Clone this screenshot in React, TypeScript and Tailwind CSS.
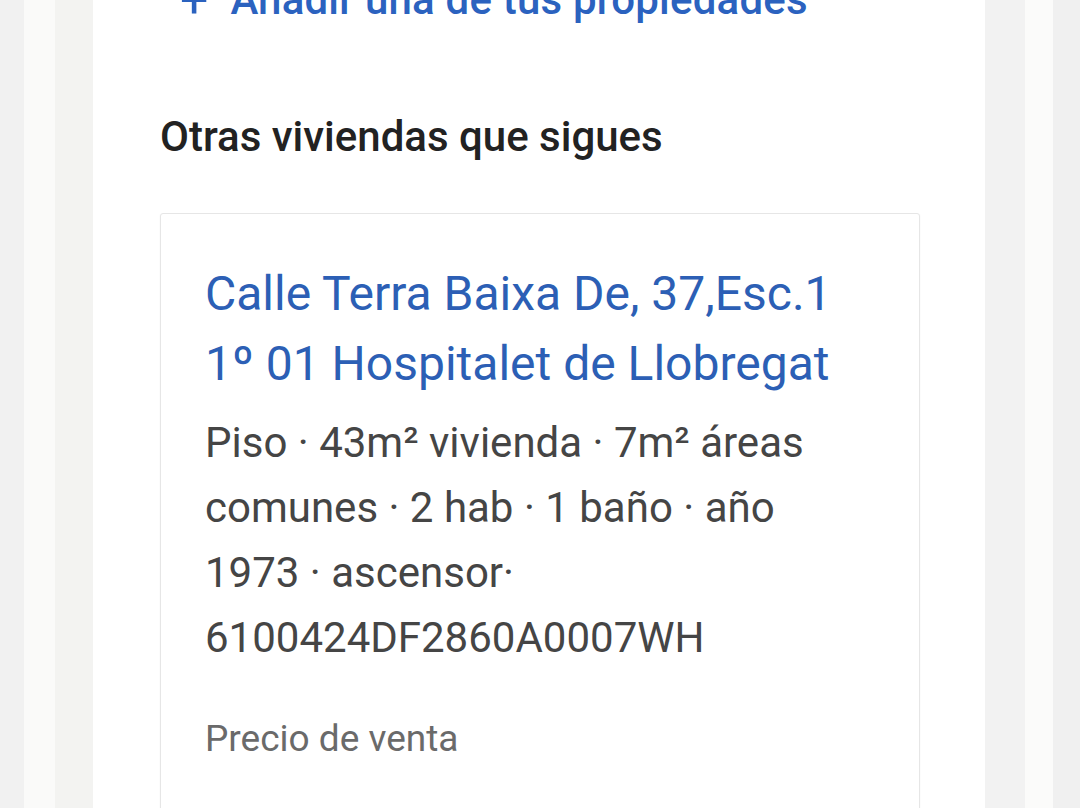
import React from "react";

export default function App() {
  return (
    <div
      className="flex h-[808px] w-[1080px] overflow-hidden bg-white"
      style={{ fontFamily: "Roboto, 'Noto Sans', sans-serif" }}
    >
      <div className="w-[24px] shrink-0 bg-[#f1f1f1]" />
      <div className="w-[31px] shrink-0 bg-[#fafaf9]" />
      <div className="w-[38px] shrink-0 bg-[#f3f3f1]" />
      <main className="flex w-[892px] shrink-0 flex-col bg-white pl-[67px] pr-[65px]">
        <div className="-mt-[22px] flex items-center gap-[22px] pl-[20px] text-[42px] font-medium leading-[44px] text-[#2b62bf]">
          <span className="text-[50px] font-normal">+</span>
          <span className="tracking-[0.2px]">Añadir una de tus propiedades</span>
        </div>
        <h2 className="mt-[93px] text-[42px] font-medium leading-[44px] text-[#222222]">
          Otras viviendas que sigues
        </h2>
        <div className="mt-[54px] w-[760px] rounded-[3px] border border-[#e6e6e6] bg-white pl-[44px] pr-[30px] pt-[45px] shadow-[0_1px_2px_rgba(0,0,0,0.05)]">
          <div className="whitespace-nowrap text-[48px] leading-[70px] text-[#2c5fb5]">
            Calle Terra Baixa De, 37,Esc.1
            <br />
            1º 01 Hospitalet de Llobregat
          </div>
          <p className="mt-[11px] whitespace-nowrap text-[42px] leading-[65px] text-[#454545]">
            Piso · 43m² vivienda · 7m² áreas
            <br />
            comunes · 2 hab · 1 baño · año
            <br />
            1973 · ascensor·
            <br />
            6100424DF2860A0007WH
          </p>
          <p className="mt-[44px] text-[37px] leading-[50px] text-[#6a6a6a]">
            Precio de venta
          </p>
          <div className="h-[200px]" />
        </div>
      </main>
      <div className="w-[40px] shrink-0 bg-[#f2f2f2]" />
      <div className="w-[28px] shrink-0 bg-[#fbfbfa]" />
      <div className="w-[27px] shrink-0 bg-[#f0f0f0]" />
    </div>
  );
}
